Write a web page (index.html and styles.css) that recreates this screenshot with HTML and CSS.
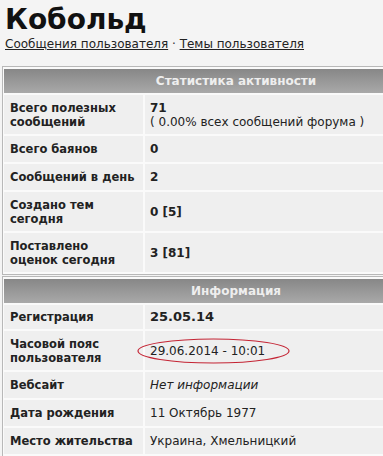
FILE: index.html
```html
<!DOCTYPE html>
<html lang="ru">
<head>
    <meta charset="UTF-8">
    <title>Кобольд</title>
    <link rel="stylesheet" href="styles.css">
</head>
<body>
    <div class="page">
        <h1 class="nick">Кобольд</h1>
        <div class="links">
            <a href="#">Сообщения пользователя</a> · <a href="#">Темы пользователя</a>
        </div>

        <div class="panel">
            <table class="info">
                <tr><th colspan="2">Статистика активности</th></tr>
                <tr class="tall">
                    <td class="label">Всего полезных сообщений</td>
                    <td class="value"><b>71</b><br>( 0.00% всех сообщений форума )</td>
                </tr>
                <tr>
                    <td class="label">Всего баянов</td>
                    <td class="value"><b>0</b></td>
                </tr>
                <tr>
                    <td class="label">Сообщений в день</td>
                    <td class="value"><b>2</b></td>
                </tr>
                <tr class="tall">
                    <td class="label">Создано тем сегодня</td>
                    <td class="value"><b>0 [5]</b></td>
                </tr>
                <tr class="tall">
                    <td class="label">Поставлено<br>оценок сегодня</td>
                    <td class="value"><b>3 [81]</b></td>
                </tr>
            </table>
        </div>

        <div class="panel">
            <table class="info">
                <tr><th colspan="2">Информация</th></tr>
                <tr class="short">
                    <td class="label">Регистрация</td>
                    <td class="value"><b class="big">25.05.14</b></td>
                </tr>
                <tr class="tall">
                    <td class="label">Часовой пояс пользователя</td>
                    <td class="value">
                        <span class="circled">29.06.2014 - 10:01
                            <svg class="ring" viewBox="0 0 154 26" preserveAspectRatio="none">
                                <ellipse cx="77" cy="13" rx="76" ry="12" fill="none" stroke="#c42434" stroke-width="1.2"/>
                            </svg>
                        </span>
                    </td>
                </tr>
                <tr>
                    <td class="label">Вебсайт</td>
                    <td class="value"><i>Нет информации</i></td>
                </tr>
                <tr>
                    <td class="label">Дата рождения</td>
                    <td class="value">11 Октябрь 1977</td>
                </tr>
                <tr>
                    <td class="label">Место жительства</td>
                    <td class="value">Украина, Хмельницкий</td>
                </tr>
                <tr>
                    <td class="label">&nbsp;</td>
                    <td class="value">&nbsp;</td>
                </tr>
            </table>
        </div>
    </div>
</body>
</html>
```

FILE: styles.css
```css
* {
    margin: 0;
    padding: 0;
    box-sizing: border-box;
}

body {
    font-family: 'DejaVu Sans', Verdana, sans-serif;
    font-size: 12px;
    background-color: #f4f4f4;
    color: #222;
    overflow: hidden;
}

.page {
    width: 470px;
    padding: 4px 0 0 2px;
}

.nick {
    font-size: 28px;
    font-weight: bold;
    color: #111;
    line-height: 32px;
    padding-left: 3px;
}

.links {
    padding-left: 3px;
    line-height: 16px;
    margin-bottom: 14px;
    color: #333;
}

.links a {
    color: #222;
}

.panel {
    border: 1px solid #b8b8b8;
    background: #fafafa;
    padding: 1px;
    margin-bottom: 1px;
}

.info {
    width: 100%;
    border-collapse: separate;
    border-spacing: 0 2px;
    margin: -1px 0;
}

.info th {
    height: 24px;
    background: linear-gradient(#878787, #a9a9a9);
    color: #eeeeee;
    font-weight: bold;
    text-align: center;
}

.info td {
    background: #efefef;
    height: 26px;
    vertical-align: middle;
    line-height: 14px;
}

.info tr.tall td {
    height: 39px;
}

.info tr.short td {
    height: 24px;
}

.label {
    width: 141px;
    padding: 0 2px 0 6px;
    font-size: 11.5px;
    font-weight: bold;
    border-right: 2px solid #fafafa;
}

.value {
    padding: 0 5px;
}

.big {
    font-size: 13px;
}

.circled {
    position: relative;
    display: inline-block;
}

.ring {
    position: absolute;
    left: -13px;
    top: -6px;
    width: 153px;
    height: 26px;
}
```
